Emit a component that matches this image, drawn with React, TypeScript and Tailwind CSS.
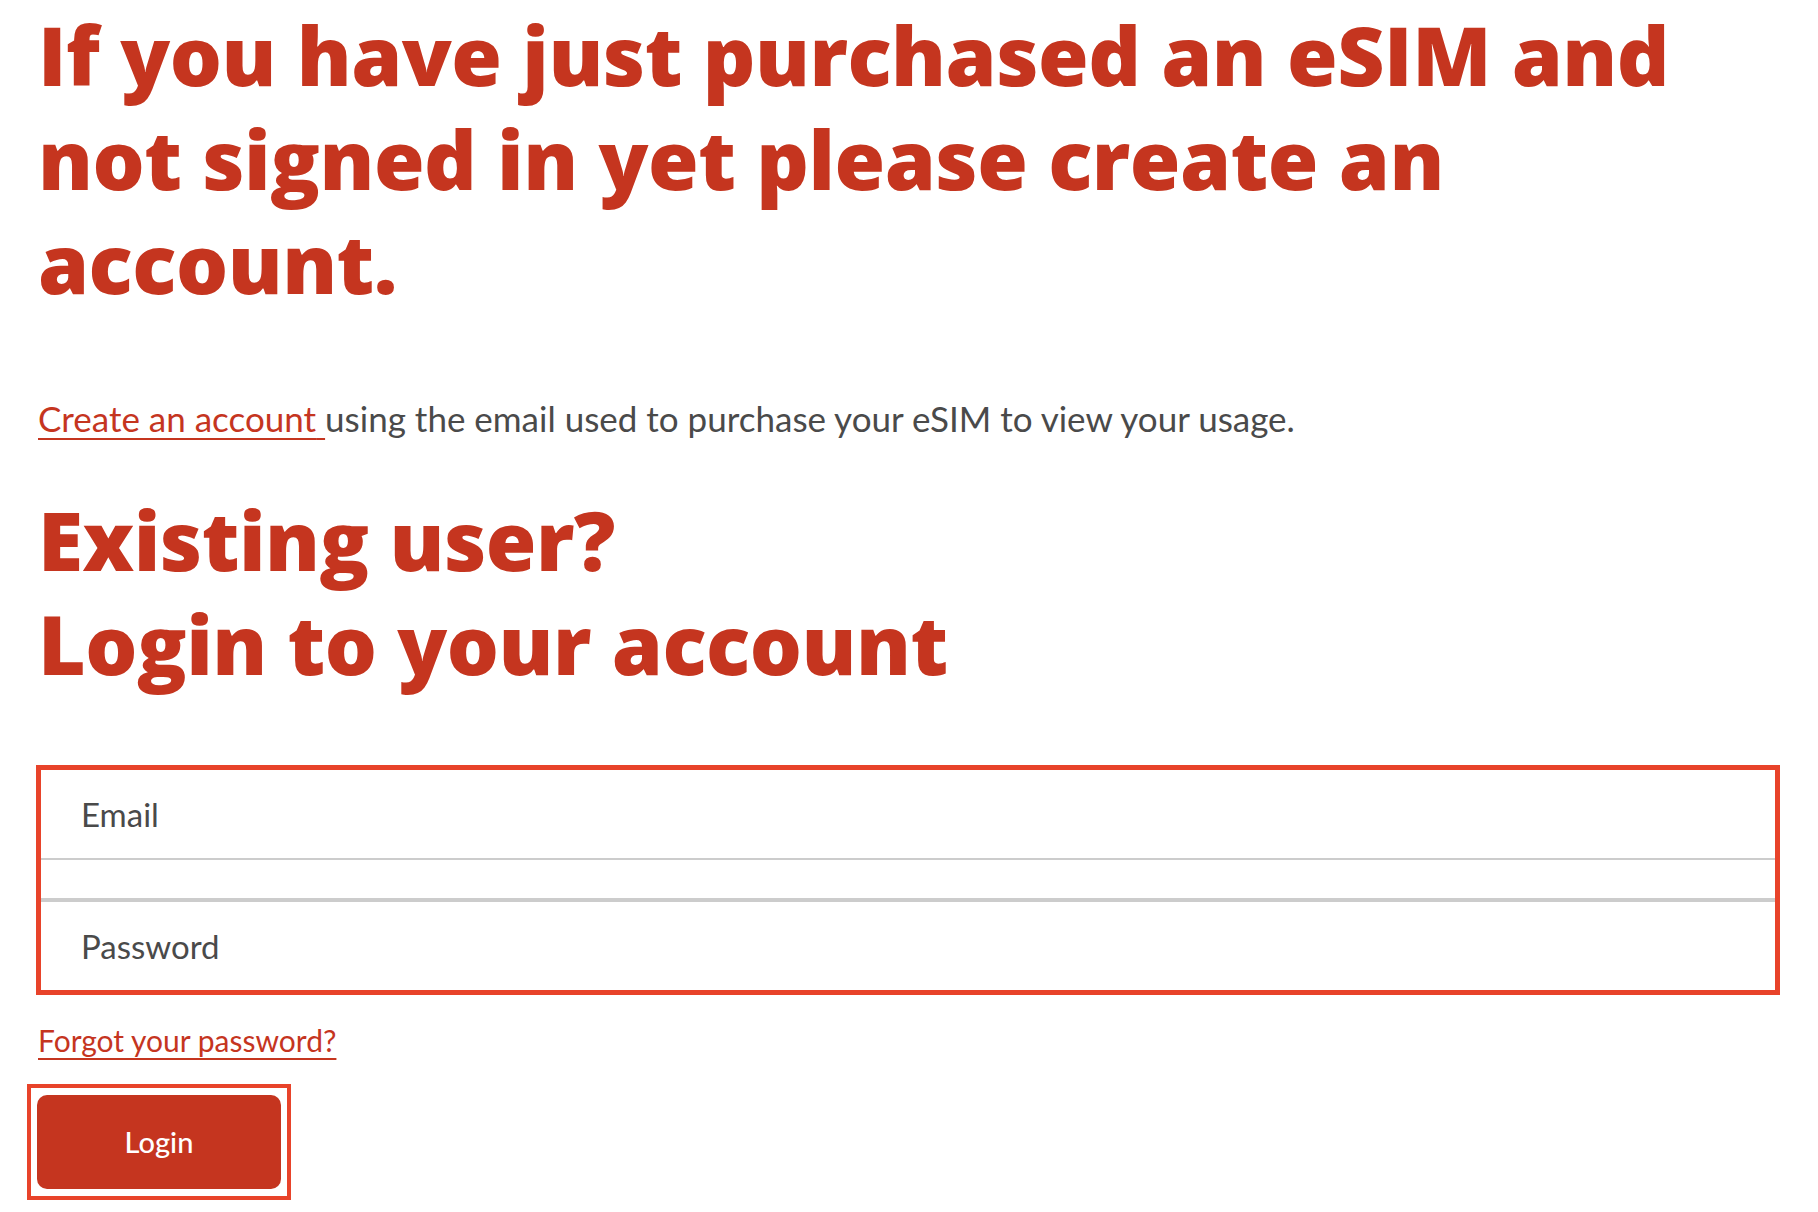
import React from 'react';

const App: React.FC = () => {
  return (
    <div className="min-h-screen bg-white font-['Lato',sans-serif] pl-[38px] pr-[38px] pt-[2px]">
      <h1 className="font-['Open_Sans',sans-serif] text-[82px] leading-[104px] font-extrabold text-[#c5351f] tracking-[-0.5px]">
        If you have just purchased an eSIM and
        <br />
        not signed in yet please create an
        <br />
        account.
      </h1>

      <p className="mt-[80px] text-[35px] leading-[48px] text-[#4a4a4a]">
        <a href="#" className="text-[#c5351f] underline decoration-2 underline-offset-[6px]">
          Create an account{' '}
        </a>
        using the email used to purchase your eSIM to view your usage.
      </p>

      <h2 className="mt-[45px] font-['Open_Sans',sans-serif] text-[82px] leading-[104px] font-extrabold text-[#c5351f] tracking-[-0.5px]">
        Existing user?
        <br />
        Login to your account
      </h2>

      <form className="mt-[70px] -ml-[2px] border-[5px] border-[#e8432a] flex flex-col">
        <input
          type="email"
          placeholder="Email"
          className="h-[90px] px-[40px] text-[33px] text-[#4a4a4a] placeholder:text-[#4a4a4a] border-b-2 border-[#cccccc] outline-none font-['Lato',sans-serif]"
        />
        <div className="h-[42px] border-b-4 border-[#cccccc]" />
        <input
          type="password"
          placeholder="Password"
          className="h-[88px] px-[40px] text-[33px] text-[#4a4a4a] placeholder:text-[#4a4a4a] outline-none font-['Lato',sans-serif]"
        />
      </form>

      <div className="mt-[25px]">
        <a href="#" className="text-[30px] leading-[40px] text-[#c5351f] underline decoration-2 underline-offset-[6px]">
          Forgot your password?
        </a>
      </div>

      <div className="mt-[24px] -ml-[11px] w-fit border-4 border-[#e8432a] px-[6px] py-[7px]">
        <button className="block w-[244px] h-[94px] rounded-[10px] bg-[#c5351f] text-white text-[29px] font-medium">
          Login
        </button>
      </div>
    </div>
  );
};

export default App;
